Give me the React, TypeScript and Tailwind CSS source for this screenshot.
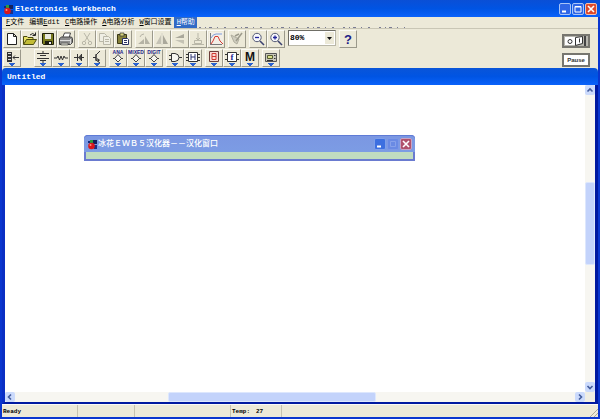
import type { ReactNode } from "react";

const MONO = "font-['Liberation_Mono','Noto_Sans_CJK_SC',monospace]";

type Tool = { label: string; art: ReactNode; off?: boolean };

const DropMark = () => <path d="M6 14h6v1h-1v1h-1v1H8v-1H7v-1H6z" fill="#2b62d0" />;

const ROW_ONE: Tool[][] = [
  [
    {
      label: "New",
      art: <path d="M4.500 3.500h6l3 3v8h-9zM10.500 3.500v3h3" fill="#fff" stroke="#222" />,
    },
    {
      label: "Open",
      art: (
        <>
          <path d="M2.500 14V6.500H6l1 1h5V10" fill="#e9e26a" stroke="#4a4a10" />
          <path d="M2.500 14.500l3-5h10l-3 5z" fill="#c2bc36" stroke="#4a4a10" />
          <path d="M9 5q3-3 5 0M14.500 2.500v3h-3" fill="none" stroke="#222" />
        </>
      ),
    },
    {
      label: "Save",
      art: (
        <>
          <path d="M3.500 3.500h11v11h-10l-1-1z" fill="#77791d" stroke="#1e1e0c" />
          <path d="M6 4h6v5H6z" fill="#e9e9df" />
          <path d="M6 11h7v4H6z" fill="#1c1c10" />
          <path d="M10 12h2v2h-2z" fill="#eee" />
        </>
      ),
    },
    {
      label: "Print",
      art: (
        <>
          <path d="M5.500 8l2-5h6l-1.500 5" fill="#fff" stroke="#444" />
          <path d="M2.500 8.500l2-1.500h10l1 1.500v4l-2 2h-11z" fill="#8d8d8d" stroke="#444" />
          <path d="M3 10.500h10M13.500 9v5" stroke="#ddd" />
          <path d="M4 13h7v2H4z" fill="#c9c9c0" stroke="#444" strokeWidth=".6" />
        </>
      ),
    },
  ],
  [
    {
      label: "Cut",
      off: true,
      art: (
        <g fill="none" stroke="#b9b7a8">
          <path d="M6 3l5 8M12 3l-5 8" />
          <circle cx="6" cy="13" r="1.700" />
          <circle cx="12" cy="13" r="1.700" />
        </g>
      ),
    },
    {
      label: "Copy",
      off: true,
      art: (
        <g fill="#efeee4" stroke="#b9b7a8">
          <path d="M3.500 3.500h5l2 2v6h-7z" />
          <path d="M7.500 6.500h5l2 2v6h-7z" />
          <path d="M9 9.500h4M9 11.500h4" />
        </g>
      ),
    },
    {
      label: "Paste",
      art: (
        <>
          <path d="M3.500 4.500h9v9h-9z" fill="#85803a" stroke="#3a3816" />
          <path d="M6 3h4v3H6z" fill="#d6d27a" stroke="#333" strokeWidth=".7" />
          <path d="M8.500 8.500h5l1 1v5h-6z" fill="#fff" stroke="#2a3063" />
          <path d="M10 10.500h3M10 12.500h3" stroke="#2a3063" />
        </>
      ),
    },
  ],
  [
    {
      label: "Rotate",
      off: true,
      art: (
        <>
          <path d="M3 14h6V9zM10 14h5L10 6z" fill="#b5b3a5" />
          <path d="M5 7q1-3 4-3" fill="none" stroke="#b5b3a5" />
        </>
      ),
    },
    {
      label: "Flip horizontal",
      off: true,
      art: (
        <>
          <path d="M3 14h5V5z" fill="#c4c2b5" />
          <path d="M10 5v9h5z" fill="#aaa89b" />
          <path d="M9 3v12" stroke="#d6d4c7" />
        </>
      ),
    },
    {
      label: "Flip vertical",
      off: true,
      art: (
        <>
          <path d="M4 8h9V4z" fill="#aaa89b" />
          <path d="M4 10h9v4z" fill="#c4c2b5" />
        </>
      ),
    },
    {
      label: "Create subcircuit",
      off: true,
      art: (
        <g fill="none" stroke="#b9b7a8">
          <path d="M9 3v7M7 8l2 2 2-2" />
          <path d="M5.500 10.500h7v3h-7zM3 14.500h12" />
        </g>
      ),
    },
    {
      label: "Display graphs",
      art: (
        <>
          <path d="M2 2h14v14H2z" fill="#f3efe6" />
          <path d="M3.500 3v12M3 14.500h12" stroke="#777" fill="none" />
          <path d="M4 14l2-3 2-4.500h3l2 4.500 3 3" stroke="#d63a33" fill="none" />
          <path d="M4 8q2-4 5-4h6" stroke="#7f9ddc" fill="none" />
        </>
      ),
    },
  ],
  [
    {
      label: "Component properties",
      off: true,
      art: (
        <>
          <path d="M3 5l3 7 3 2 2-5z" fill="#cfcdbf" stroke="#b0ae9f" />
          <path d="M8 11l6-8M7 6l4-2" stroke="#9d9b8c" strokeWidth="1.500" />
        </>
      ),
    },
  ],
  [
    {
      label: "Zoom out",
      art: (
        <>
          <circle cx="8" cy="7.500" r="4.200" fill="#f7f7fb" stroke="#555b75" />
          <path d="M6 7.500h4" stroke="#22259a" strokeWidth="1.300" />
          <path d="M11 11l4 4" stroke="#3c4270" strokeWidth="1.600" />
        </>
      ),
    },
    {
      label: "Zoom in",
      art: (
        <>
          <circle cx="8" cy="7.500" r="4.200" fill="#f7f7fb" stroke="#555b75" />
          <path d="M6 7.500h4M8 5.500v4" stroke="#22259a" strokeWidth="1.300" />
          <path d="M11 11l4 4" stroke="#3c4270" strokeWidth="1.600" />
        </>
      ),
    },
  ],
];

const HELP: Tool = {
  label: "Help",
  art: (
    <text x="9" y="14" textAnchor="middle" fontFamily="Liberation Sans" fontWeight="700" fontSize="13" fill="#1c1c86">
      ?
    </text>
  ),
};

const diamondTool = (label: string, caption: string): Tool => ({
  label,
  art: (
    <>
      <text x="9" y="5" textAnchor="middle" fontFamily="Liberation Sans" fontWeight="700" fontSize="5" fill="#23238c">
        {caption}
      </text>
      <path d="M9 5.500l3.500 4L9 13l-3.500-3.500zM4 9.500h2M12 9.500h2" fill="#f6f5ee" stroke="#444" />
      <DropMark />
    </>
  ),
});

const ROW_TWO: Tool[][] = [
  [
    {
      label: "Favorites",
      art: (
        <>
          <path d="M4 3h5v10H4z" fill="#333" />
          <path d="M5 4.500h3M5 7.500h3M5 10.500h3" stroke="#ddd" />
          <path d="M10 8.500h6M12 6.500l-2 2 2 2" stroke="#333" fill="none" />
          <DropMark />
        </>
      ),
    },
  ],
  [
    {
      label: "Sources",
      art: (
        <>
          <path d="M9 2v2M3 4.500h12M6 6.500h6M3 9.500h12M6 11.500h6M9 12v2" stroke="#333" />
          <DropMark />
        </>
      ),
    },
    {
      label: "Basic",
      art: (
        <>
          <path d="M2 9h3l1-2 1.500 4L9 7l1.500 4L12 7l1 2h3" stroke="#333" fill="none" />
          <DropMark />
        </>
      ),
    },
    {
      label: "Diodes",
      art: (
        <>
          <path d="M4 8.500h10M7.500 5v7M11.500 5v7" stroke="#333" />
          <path d="M8 8.500l3-3v6z" fill="#444" />
          <DropMark />
        </>
      ),
    },
    {
      label: "Transistors",
      art: (
        <>
          <path d="M12 2L8 6v5l4 3M5 8.500h3M8 5v7" stroke="#333" fill="none" />
          <path d="M9 9l1 4 2-2z" fill="#333" />
          <DropMark />
        </>
      ),
    },
  ],
  [
    diamondTool("Analog ICs", "ANA"),
    diamondTool("Mixed ICs", "MIXED"),
    diamondTool("Digital ICs", "DIGIT"),
  ],
  [
    {
      label: "Logic gates",
      art: (
        <>
          <path d="M5.500 4.500H9q4 .5 4 4t-4 4H5.500zM3 6.500h2M3 10.500h2M13 8.500h3" stroke="#333" fill="#f7f6ef" />
          <DropMark />
        </>
      ),
    },
    {
      label: "Digital",
      art: (
        <>
          <path d="M4.500 3.500h9v9h-9zM2 5.500h2M2 8.500h2M2 11.500h2M14 5.500h2M14 8.500h2M14 11.500h2" stroke="#333" fill="#fff" />
          <path d="M7 5v6M11 5v6M7 8h4" stroke="#2f3775" />
          <DropMark />
        </>
      ),
    },
  ],
  [
    {
      label: "Indicators",
      art: (
        <>
          <path d="M4.500 2.500h9v10h-9z" stroke="#6d3d3a" fill="#f8dbd5" />
          <path d="M7 4.500h4v6H7zM7 7.500h4" stroke="#cf3b32" fill="none" />
          <DropMark />
        </>
      ),
    },
    {
      label: "Controls",
      art: (
        <>
          <path d="M4.500 3.500h9v9h-9zM2 5.500h2M2 10.500h2M14 5.500h2M14 10.500h2" stroke="#333" fill="#fff" />
          <text x="9" y="11" textAnchor="middle" fontFamily="Liberation Serif" fontWeight="700" fontSize="9" fill="#23238c">
            f
          </text>
          <DropMark />
        </>
      ),
    },
    {
      label: "Miscellaneous",
      art: (
        <>
          <text x="9" y="12" textAnchor="middle" fontFamily="Liberation Sans" fontWeight="700" fontSize="12" fill="#111">
            M
          </text>
          <DropMark />
        </>
      ),
    },
  ],
  [
    {
      label: "Instruments",
      art: (
        <>
          <path d="M3.500 4.500h11v8h-11z" stroke="#555" fill="#c9c8ba" />
          <path d="M5.500 6.500h5v3h-5z" stroke="#555b33" fill="#d8e08a" />
          <path d="M12 6.500h1.500M12 9.500h1.500M5 11.500h6" stroke="#333" />
          <DropMark />
        </>
      ),
    },
  ],
];

function ToolButton({ tool }: { tool: Tool }) {
  return (
    <button
      type="button"
      aria-label={tool.label}
      disabled={tool.off}
      className="size-[18px] shrink-0 border border-t-[#fbfaf4] border-r-[#9b998b] border-b-[#9b998b] border-l-[#fbfaf4] bg-[#ece9d8]"
    >
      <svg viewBox="1 1 16 16" className="block size-4">
        {tool.art}
      </svg>
    </button>
  );
}

function ToolGroups({ groups }: { groups: Tool[][] }) {
  return groups.map((group) => (
    <div key={group[0].label} className="flex">
      {group.map((tool) => (
        <ToolButton key={tool.label} tool={tool} />
      ))}
    </div>
  ));
}

function AppIcon() {
  return (
    <svg viewBox="0 0 11 11" className="size-[11px] shrink-0">
      <path d="M3 1h3v3H3z" fill="#2c9a3f" />
      <path d="M6 1h4v4H6z" fill="#14205c" />
      <path d="M7 6h3v4H7z" fill="#1b2f86" />
      <path d="M1 2h2v2H1z" fill="#152a7a" />
      <circle cx="4.500" cy="7" r="3.300" fill="#d8171b" />
      <circle cx="3.500" cy="6" r="1" fill="#ff8f80" />
    </svg>
  );
}

const CAPTION_STYLES = {
  blue: "border-[#a9c4f7] bg-[#2f66e6]",
  red: "border-[#f3c0ae] bg-[#dd4a2b]",
  dimBlue: "border-[#7f9fea] bg-[#3d6fe0]",
  faint: "border-[#7d98e6] bg-[#6a8ae4]",
  dimRed: "border-[#c9a3c4] bg-[#b0526c]",
};

function CaptionButton({ label, tone, children }: { label: string; tone: keyof typeof CAPTION_STYLES; children: ReactNode }) {
  return (
    <button type="button" aria-label={label} className={`size-3 rounded-[2px] border ${CAPTION_STYLES[tone]}`}>
      <svg viewBox="0 0 10 10" className="block size-full" fill="none">
        {children}
      </svg>
    </button>
  );
}

const minimize = <path d="M2 7.500h4" stroke="#fff" strokeWidth="2" />;
const cross = <path d="M2 2l6 6M8 2l-6 6" stroke="#fff" strokeWidth="1.600" />;

function ScrollArrow({ label, d }: { label: string; d: string }) {
  return (
    <button type="button" aria-label={label} className="size-[10px] shrink-0 rounded-[2px] bg-[#cbdafc]">
      <svg viewBox="0 0 10 10" className="block size-full">
        <path d={d} fill="none" stroke="#435c9c" strokeWidth="1.600" />
      </svg>
    </button>
  );
}

const MENUS = [
  { before: "", hot: "F", after: "文件" },
  { before: "编辑", hot: "E", after: "dit" },
  { before: "", hot: "C", after: "电路操作" },
  { before: "", hot: "A", after: "电路分析" },
  { before: "", hot: "W", after: "窗口设置" },
  { before: "", hot: "H", after: "帮助", active: true },
];

function MenuBar() {
  return (
    <nav className={`flex h-[11px] bg-[#ece9d8] pl-px text-[7px] leading-[11px] text-black ${MONO}`}>
      {MENUS.map((m) => (
        <button
          key={m.hot}
          type="button"
          className={`pr-[2px] pl-[3px] whitespace-nowrap ${m.active ? "bg-[#316ac5] text-white" : ""}`}
        >
          {m.before}
          <span className="underline">{m.hot}</span>
          {m.after}
        </button>
      ))}
      <svg viewBox="0 0 212 11" className="h-[11px] w-[212px]">
        <path d="M2 10.500h206" stroke="#7b7d94" strokeDasharray="2 4 1 3 3 5 1 6 2 9" />
      </svg>
    </nav>
  );
}

function Toolbar() {
  return (
    <div className="flex justify-between border-t border-[#c9c6b5] bg-[#ece9d8] pt-px pr-2 pb-px pl-px">
      <div className="flex flex-col gap-px">
        <div className="flex gap-[3px]">
          <ToolGroups groups={ROW_ONE} />
          <div className="relative h-4 w-12">
            <select
              aria-label="Zoom level"
              defaultValue="80"
              className={`block h-4 w-full appearance-none border border-t-[#6f6e66] border-r-[#b9b7a8] border-b-[#b9b7a8] border-l-[#6f6e66] bg-white pl-px text-[8px] leading-3 font-bold text-black ${MONO}`}
            >
              <option value="50">50%</option>
              <option value="80">80%</option>
              <option value="100">100%</option>
            </select>
            <svg viewBox="0 0 9 12" className="pointer-events-none absolute top-[2px] right-[2px] h-3 w-[9px] bg-[#ece9d8]">
              <path d="M2 5h5L4.500 8z" fill="#111" />
            </svg>
          </div>
          <ToolButton tool={HELP} />
        </div>
        <div className="flex gap-[3px]">
          <div className="mr-[10px] flex">
            <ToolGroups groups={ROW_TWO.slice(0, 1)} />
          </div>
          <ToolGroups groups={ROW_TWO.slice(1)} />
        </div>
      </div>
      <div className="flex flex-col justify-end gap-[5px]">
        <button type="button" aria-label="Activate simulation" className="h-[14px] w-7 border-2 border-[#77766f] bg-[#b7b6ae]">
          <svg viewBox="0 0 24 10" className="block h-full w-full">
            <path d="M1 1h11v8H1z" fill="#fff" />
            <circle cx="6" cy="5.500" r="2" fill="none" stroke="#333" />
            <path d="M11.500 1.500l7-1v7l-7 2z" fill="#fff" stroke="#333" />
            <path d="M15.500 2.500v4" stroke="#333" />
            <path d="M20 0h2v10h-2z" fill="#444" />
          </svg>
        </button>
        <button
          type="button"
          className="h-[14px] w-7 border-2 border-[#77766f] bg-white font-['Liberation_Sans',sans-serif] text-[6px] leading-[10px] font-bold text-[#333]"
        >
          Pause
        </button>
      </div>
    </div>
  );
}

function LocalizerWindow() {
  return (
    <section className="absolute top-[50px] left-[79px] w-[331px] rounded-t-[4px] bg-[#6a7bd0] p-[2px] pt-0">
      <header className="-mx-[2px] flex h-[17px] items-center rounded-t-[4px] border-t border-[#5f7bd6] bg-linear-to-b from-[#7b97e2] to-[#7c9ce4] px-[3px]">
        <AppIcon />
        <h2 className={`grow text-[8px] leading-4 font-medium whitespace-nowrap text-white ${MONO}`}>
          冰花ＥＷＢ５汉化器－－汉化窗口
        </h2>
        <div className="flex gap-px">
          <CaptionButton label="Minimize" tone="dimBlue">
            {minimize}
          </CaptionButton>
          <CaptionButton label="Maximize" tone="faint">
            <path d="M2.500 2.500h5v5h-5z" stroke="#87a1ea" />
          </CaptionButton>
          <CaptionButton label="Close" tone="dimRed">
            {cross}
          </CaptionButton>
        </div>
      </header>
      <div className="h-[7px] bg-[#c0dcc0]" />
    </section>
  );
}

function CircuitWindow() {
  return (
    <section className="flex min-h-0 grow flex-col bg-[#ece9d8]">
      <header className="flex h-[17px] shrink-0 items-center rounded-t-[4px] bg-linear-to-b from-[#0a55d8] via-[#0054e3] to-[#0a62fa] pl-[5px]">
        <h2 className={`text-[8px] leading-4 font-bold text-white ${MONO}`}>Untitled</h2>
      </header>
      <div className="relative flex min-h-0 grow flex-col border-x-[3px] border-b-2 border-[#0a2fc4] border-r-[#0019a0] border-b-[#0019a0] bg-white">
        <div className="flex min-h-0 grow">
          <main className="grow bg-white" />
          <div className="flex w-[10px] flex-col bg-[#f7f6f1]">
            <ScrollArrow label="Scroll up" d="M2.500 6.500L5 4l2.500 2.500" />
            <div className="grow-[88]" />
            <div className="grow-[82] rounded-[2px] border border-[#dde7fd] bg-[#c3d3fb]" />
            <div className="grow-[118]" />
            <ScrollArrow label="Scroll down" d="M2.500 4L5 6.500 7.500 4" />
          </div>
        </div>
        <div className="flex h-[10px] shrink-0 bg-[#f7f6f1]">
          <ScrollArrow label="Scroll left" d="M6 2.500L3.500 5 6 7.500" />
          <div className="grow-[154]" />
          <div className="grow-[207] rounded-[2px] border border-[#dde7fd] bg-[#c3d3fb]" />
          <div className="grow-[200]" />
          <ScrollArrow label="Scroll right" d="M4 2.500L6.500 5 4 7.500" />
          <div className="w-[10px] bg-[#f0eee4]" />
        </div>
        <LocalizerWindow />
      </div>
    </section>
  );
}

function StatusBar() {
  return (
    <footer className={`flex h-[13px] shrink-0 border-t border-[#fbfaf5] bg-[#ece9d8] text-[6px] leading-[14px] text-black ${MONO}`}>
      <div className="w-[76px] border-r border-[#c5c2b0] pl-px font-bold">Ready</div>
      <div className="w-[57px] border-r border-[#c5c2b0]" />
      <div className="w-24 border-r border-[#c5c2b0]" />
      <div className="flex w-[51px] gap-[6px] border-r border-[#c5c2b0] pl-px font-bold">
        <span>Temp:</span>
        <span>27</span>
      </div>
      <div className="grow" />
      <svg viewBox="0 0 8 12" className="h-3 w-2">
        <path d="M8 4L0 12M8 8l-4 4" stroke="#aaa797" />
      </svg>
    </footer>
  );
}

export default function App() {
  return (
    <div className="flex h-screen flex-col overflow-hidden bg-[#0a36cf] px-[2px] pb-[2px]">
      <header className="-mx-[2px] flex h-[17px] shrink-0 items-center gap-px bg-linear-to-b from-[#0a4fd6] via-[#0054e3] to-[#0a62fa] pt-px pr-[3px] pl-[3px]">
        <AppIcon />
        <h1 className={`grow text-[8px] leading-4 font-bold text-white ${MONO}`}>Electronics Workbench</h1>
        <div className="flex gap-px">
          <CaptionButton label="Minimize" tone="blue">
            {minimize}
          </CaptionButton>
          <CaptionButton label="Restore" tone="blue">
            <path d="M2 2.500h6v5.500H2zM2 3h6" stroke="#fff" />
          </CaptionButton>
          <CaptionButton label="Close" tone="red">
            {cross}
          </CaptionButton>
        </div>
      </header>
      <MenuBar />
      <Toolbar />
      <CircuitWindow />
      <StatusBar />
    </div>
  );
}
